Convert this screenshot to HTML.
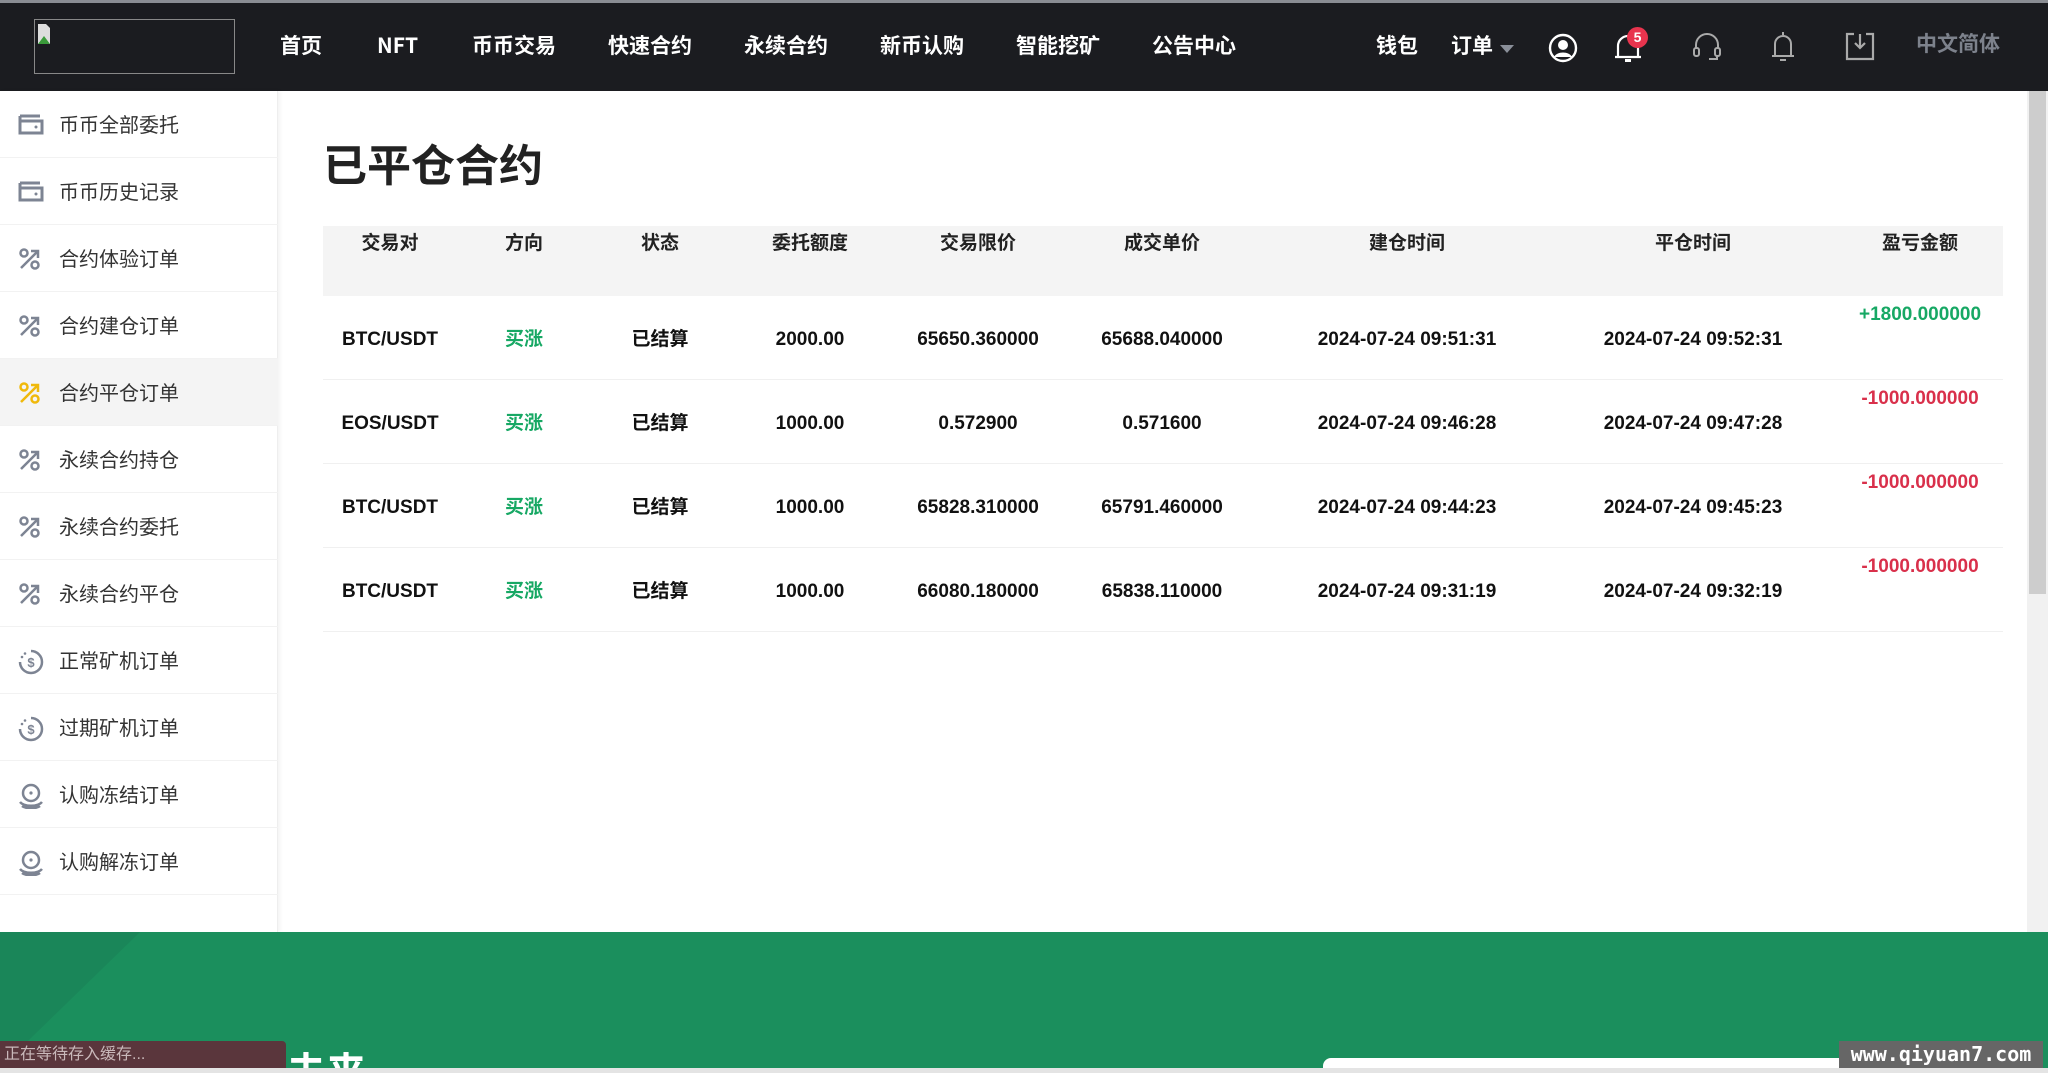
<!DOCTYPE html>
<html><head><meta charset="utf-8"><style>
*{margin:0;padding:0;box-sizing:border-box}
body{width:2048px;height:1073px;overflow:hidden;position:relative;background:#fff;font-family:"Liberation Sans","Noto Sans CJK SC",sans-serif}
.abs{position:absolute}
.cjk{font-family:"Noto Sans CJK SC",sans-serif}
.nav{left:0;top:0;width:2048px;height:91px;background:#1b1c20;border-top:3px solid #8a8d93}
.nav .it{position:absolute;top:27px;color:#fff;font-size:21px;font-weight:bold;white-space:nowrap;font-family:"Noto Sans CJK SC",sans-serif}
.side{left:0;top:91px;width:278px;height:841px;background:#fff;box-shadow:2px 0 4px rgba(0,0,0,.05);border-right:1px solid #eee}
.si{position:absolute;left:0;width:278px;height:67px;border-bottom:1px solid #f2f2f2;font-size:20px;color:#333;line-height:70px;padding-left:59px}
.si svg{position:absolute;left:18px;top:22px}
.th{position:absolute;top:228px;font-size:19px;font-weight:bold;color:#222;transform:translateX(-50%);white-space:nowrap;font-family:"Noto Sans CJK SC",sans-serif}
.td{position:absolute;font-size:19px;font-weight:bold;color:#111;transform:translateX(-50%);white-space:nowrap}
.td.cjk{margin-top:-5px}
.g{color:#17a864}.r{color:#d9304b}
.row{position:absolute;left:323px;width:1680px;height:84px;border-bottom:1px solid #f0f0f0}
</style></head><body>
<div class="abs nav">
 <div class="abs" style="left:34px;top:16px;width:201px;height:55px;border:1px solid #888"></div>
 <svg class="abs" style="left:37px;top:20px" width="14" height="22"><path d="M1 1h8l4 4v16H1z" fill="#ddd"/><path d="M1 21l6-8 6 8z" fill="#3a9a3a"/></svg>
 <div class="it" style="left:280px">首页</div>
 <div class="it" style="left:377px">NFT</div>
 <div class="it" style="left:472px">币币交易</div>
 <div class="it" style="left:608px">快速合约</div>
 <div class="it" style="left:744px">永续合约</div>
 <div class="it" style="left:880px">新币认购</div>
 <div class="it" style="left:1016px">智能挖矿</div>
 <div class="it" style="left:1152px">公告中心</div>
 <div class="it" style="left:1376px">钱包</div>
 <div class="it" style="left:1451px">订单</div>
 <div class="abs" style="left:1500px;top:42px;width:0;height:0;border-left:7px solid transparent;border-right:7px solid transparent;border-top:8px solid #8a8f99"></div>
 <svg class="abs" style="left:1548px;top:30px" width="30" height="30" viewBox="0 0 30 30"><circle cx="15" cy="15" r="13" fill="none" stroke="#fff" stroke-width="2.4"/><circle cx="15" cy="12" r="5" fill="#fff"/><path d="M6 24c3-6 15-6 18 0" fill="#fff"/></svg>
 <svg class="abs" style="left:1613px;top:28px" width="30" height="34" viewBox="0 0 30 34"><path d="M5 26V15a10 10 0 0 1 20 0v11zM2 26h26" fill="none" stroke="#fff" stroke-width="2.2"/><rect x="12" y="28" width="6" height="3" fill="#fff"/></svg>
 <div class="abs" style="left:1627px;top:24px;width:21px;height:21px;border-radius:50%;background:#e8344e;color:#fff;font-size:14px;font-weight:bold;text-align:center;line-height:21px">5</div>
 <svg class="abs" style="left:1692px;top:28px" width="30" height="32" viewBox="0 0 30 32"><path d="M4 18v-4a11 11 0 0 1 22 0v4" fill="none" stroke="#aaa" stroke-width="2"/><rect x="2" y="17" width="5" height="8" rx="2" fill="none" stroke="#aaa" stroke-width="2"/><rect x="23" y="17" width="5" height="8" rx="2" fill="none" stroke="#aaa" stroke-width="2"/><path d="M25 25v3h-8" fill="none" stroke="#aaa" stroke-width="2"/></svg>
 <svg class="abs" style="left:1770px;top:26px" width="26" height="34" viewBox="0 0 26 34"><path d="M13 3v3M5 27V15a8 8 0 0 1 16 0v12zM2 27h22M10 31h6" fill="none" stroke="#aaa" stroke-width="2"/></svg>
 <svg class="abs" style="left:1845px;top:28px" width="30" height="30" viewBox="0 0 30 30"><path d="M9 3H2v25h26V3h-7M15 3v14M10 12l5 5 5-5" fill="none" stroke="#aaa" stroke-width="2.2"/></svg>
 <div class="it" style="left:1916px;top:25px;color:#7d828c">中文简体</div>
</div>

<div class="abs side">
 <div class="si" style="top:0"><svg width="26" height="22" viewBox="0 0 26 22"><path d="M2 3h20M2 3v17h22V8H2" fill="none" stroke="#7d8493" stroke-width="3"/><circle cx="18" cy="14" r="1.5" fill="#7d8493"/></svg>币币全部委托</div>
 <div class="si" style="top:67px"><svg width="26" height="22" viewBox="0 0 26 22"><path d="M2 3h20M2 3v17h22V8H2" fill="none" stroke="#7d8493" stroke-width="3"/><circle cx="18" cy="14" r="1.5" fill="#7d8493"/></svg>币币历史记录</div>
 <div class="si" style="top:134px"><svg width="24" height="24" viewBox="0 0 24 24"><circle cx="6" cy="6" r="3.5" fill="none" stroke="#7d8493" stroke-width="2.5"/><circle cx="17" cy="18" r="3.5" fill="none" stroke="#7d8493" stroke-width="2.5"/><path d="M3 21L20 4M13 4h7v7" fill="none" stroke="#7d8493" stroke-width="2.5"/></svg>合约体验订单</div>
 <div class="si" style="top:201px"><svg width="24" height="24" viewBox="0 0 24 24"><circle cx="6" cy="6" r="3.5" fill="none" stroke="#7d8493" stroke-width="2.5"/><circle cx="17" cy="18" r="3.5" fill="none" stroke="#7d8493" stroke-width="2.5"/><path d="M3 21L20 4M13 4h7v7" fill="none" stroke="#7d8493" stroke-width="2.5"/></svg>合约建仓订单</div>
 <div class="si" style="top:268px;background:#f4f4f4"><svg width="24" height="24" viewBox="0 0 24 24"><circle cx="6" cy="6" r="3.5" fill="none" stroke="#f0b90b" stroke-width="2.5"/><circle cx="17" cy="18" r="3.5" fill="none" stroke="#f0b90b" stroke-width="2.5"/><path d="M3 21L20 4M13 4h7v7" fill="none" stroke="#f0b90b" stroke-width="2.5"/></svg>合约平仓订单</div>
 <div class="si" style="top:335px"><svg width="24" height="24" viewBox="0 0 24 24"><circle cx="6" cy="6" r="3.5" fill="none" stroke="#7d8493" stroke-width="2.5"/><circle cx="17" cy="18" r="3.5" fill="none" stroke="#7d8493" stroke-width="2.5"/><path d="M3 21L20 4M13 4h7v7" fill="none" stroke="#7d8493" stroke-width="2.5"/></svg>永续合约持仓</div>
 <div class="si" style="top:402px"><svg width="24" height="24" viewBox="0 0 24 24"><circle cx="6" cy="6" r="3.5" fill="none" stroke="#7d8493" stroke-width="2.5"/><circle cx="17" cy="18" r="3.5" fill="none" stroke="#7d8493" stroke-width="2.5"/><path d="M3 21L20 4M13 4h7v7" fill="none" stroke="#7d8493" stroke-width="2.5"/></svg>永续合约委托</div>
 <div class="si" style="top:469px"><svg width="24" height="24" viewBox="0 0 24 24"><circle cx="6" cy="6" r="3.5" fill="none" stroke="#7d8493" stroke-width="2.5"/><circle cx="17" cy="18" r="3.5" fill="none" stroke="#7d8493" stroke-width="2.5"/><path d="M3 21L20 4M13 4h7v7" fill="none" stroke="#7d8493" stroke-width="2.5"/></svg>永续合约平仓</div>
 <div class="si" style="top:536px"><svg width="26" height="26" viewBox="0 0 26 26"><path d="M13 2a11 11 0 1 1-11 11" fill="none" stroke="#7d8493" stroke-width="2.5"/><circle cx="4" cy="8" r="1.3" fill="#7d8493"/><circle cx="7" cy="4.5" r="1.3" fill="#7d8493"/><text x="13" y="18" font-size="13" font-weight="bold" fill="#7d8493" text-anchor="middle" font-family="Liberation Sans">$</text></svg>正常矿机订单</div>
 <div class="si" style="top:603px"><svg width="26" height="26" viewBox="0 0 26 26"><path d="M13 2a11 11 0 1 1-11 11" fill="none" stroke="#7d8493" stroke-width="2.5"/><circle cx="4" cy="8" r="1.3" fill="#7d8493"/><circle cx="7" cy="4.5" r="1.3" fill="#7d8493"/><text x="13" y="18" font-size="13" font-weight="bold" fill="#7d8493" text-anchor="middle" font-family="Liberation Sans">$</text></svg>过期矿机订单</div>
 <div class="si" style="top:670px"><svg width="26" height="26" viewBox="0 0 26 26"><circle cx="13" cy="10" r="8" fill="none" stroke="#7d8493" stroke-width="2.5"/><circle cx="13" cy="10" r="1.6" fill="#7d8493"/><path d="M2 19c4 5 18 5 22 0M4 23c4 3 14 3 18 0" fill="none" stroke="#7d8493" stroke-width="2.5"/></svg>认购冻结订单</div>
 <div class="si" style="top:737px"><svg width="26" height="26" viewBox="0 0 26 26"><circle cx="13" cy="10" r="8" fill="none" stroke="#7d8493" stroke-width="2.5"/><circle cx="13" cy="10" r="1.6" fill="#7d8493"/><path d="M2 19c4 5 18 5 22 0M4 23c4 3 14 3 18 0" fill="none" stroke="#7d8493" stroke-width="2.5"/></svg>认购解冻订单</div>
</div>

<div class="abs" style="left:323px;top:130px;font-size:44px;font-weight:bold;color:#222">已平仓合约</div>
<div class="abs" style="left:323px;top:226px;width:1680px;height:70px;background:#f4f4f4"></div>
<div class="th" style="left:390px">交易对</div><div class="th" style="left:524px">方向</div><div class="th" style="left:660px">状态</div><div class="th" style="left:810px">委托额度</div><div class="th" style="left:978px">交易限价</div><div class="th" style="left:1162px">成交单价</div><div class="th" style="left:1407px">建仓时间</div><div class="th" style="left:1693px">平仓时间</div><div class="th" style="left:1920px">盈亏金额</div>

<div class="row" style="top:296px"></div><div class="row" style="top:380px"></div><div class="row" style="top:464px"></div><div class="row" style="top:548px"></div>

<div class="td" style="top:329px;left:390px">BTC/USDT</div><div class="td g cjk" style="top:329px;left:524px">买涨</div><div class="td cjk" style="top:329px;left:660px">已结算</div><div class="td" style="top:329px;left:810px">2000.00</div><div class="td" style="top:329px;left:978px">65650.360000</div><div class="td" style="top:329px;left:1162px">65688.040000</div><div class="td" style="top:329px;left:1407px">2024-07-24 09:51:31</div><div class="td" style="top:329px;left:1693px">2024-07-24 09:52:31</div><div class="td g" style="top:304px;left:1920px">+1800.000000</div>

<div class="td" style="top:413px;left:390px">EOS/USDT</div><div class="td g cjk" style="top:413px;left:524px">买涨</div><div class="td cjk" style="top:413px;left:660px">已结算</div><div class="td" style="top:413px;left:810px">1000.00</div><div class="td" style="top:413px;left:978px">0.572900</div><div class="td" style="top:413px;left:1162px">0.571600</div><div class="td" style="top:413px;left:1407px">2024-07-24 09:46:28</div><div class="td" style="top:413px;left:1693px">2024-07-24 09:47:28</div><div class="td r" style="top:388px;left:1920px">-1000.000000</div>

<div class="td" style="top:497px;left:390px">BTC/USDT</div><div class="td g cjk" style="top:497px;left:524px">买涨</div><div class="td cjk" style="top:497px;left:660px">已结算</div><div class="td" style="top:497px;left:810px">1000.00</div><div class="td" style="top:497px;left:978px">65828.310000</div><div class="td" style="top:497px;left:1162px">65791.460000</div><div class="td" style="top:497px;left:1407px">2024-07-24 09:44:23</div><div class="td" style="top:497px;left:1693px">2024-07-24 09:45:23</div><div class="td r" style="top:472px;left:1920px">-1000.000000</div>

<div class="td" style="top:581px;left:390px">BTC/USDT</div><div class="td g cjk" style="top:581px;left:524px">买涨</div><div class="td cjk" style="top:581px;left:660px">已结算</div><div class="td" style="top:581px;left:810px">1000.00</div><div class="td" style="top:581px;left:978px">66080.180000</div><div class="td" style="top:581px;left:1162px">65838.110000</div><div class="td" style="top:581px;left:1407px">2024-07-24 09:31:19</div><div class="td" style="top:581px;left:1693px">2024-07-24 09:32:19</div><div class="td r" style="top:556px;left:1920px">-1000.000000</div>

<div class="abs" style="left:2027px;top:91px;width:21px;height:841px;background:#f1f1f1"></div>
<div class="abs" style="left:2029px;top:91px;width:17px;height:503px;background:#cdcdcd"></div>

<div class="abs" style="left:0;top:932px;width:2048px;height:136px;background:#1b8f5d;overflow:hidden">
 <div class="abs" style="left:0;top:0;width:140px;height:136px;background:#1a8659;clip-path:polygon(0 0,100% 0,0 100%)"></div>
 <div class="abs" style="left:286px;top:108px;color:#fff;font-size:40px;font-weight:bold">未来</div>
 <div class="abs" style="left:1323px;top:126px;width:520px;height:20px;background:#fff;border-radius:8px 0 0 0"></div>
</div>
<div class="abs" style="left:0;top:1068px;width:2048px;height:5px;background:#e4e4e4"></div>
<div class="abs" style="left:0;top:1041px;width:286px;height:27px;background:#5a363c;color:#c9b8ba;font-size:16px;line-height:27px;padding-left:4px;border-radius:0 4px 0 0">正在等待存入缓存...</div>
<div class="abs" style="left:1839px;top:1041px;width:204px;height:27px;background:#666;color:#fff;font-size:20px;font-weight:bold;line-height:27px;text-align:center;font-family:'DejaVu Sans Mono',monospace">www.qiyuan7.com</div>
</body></html>
